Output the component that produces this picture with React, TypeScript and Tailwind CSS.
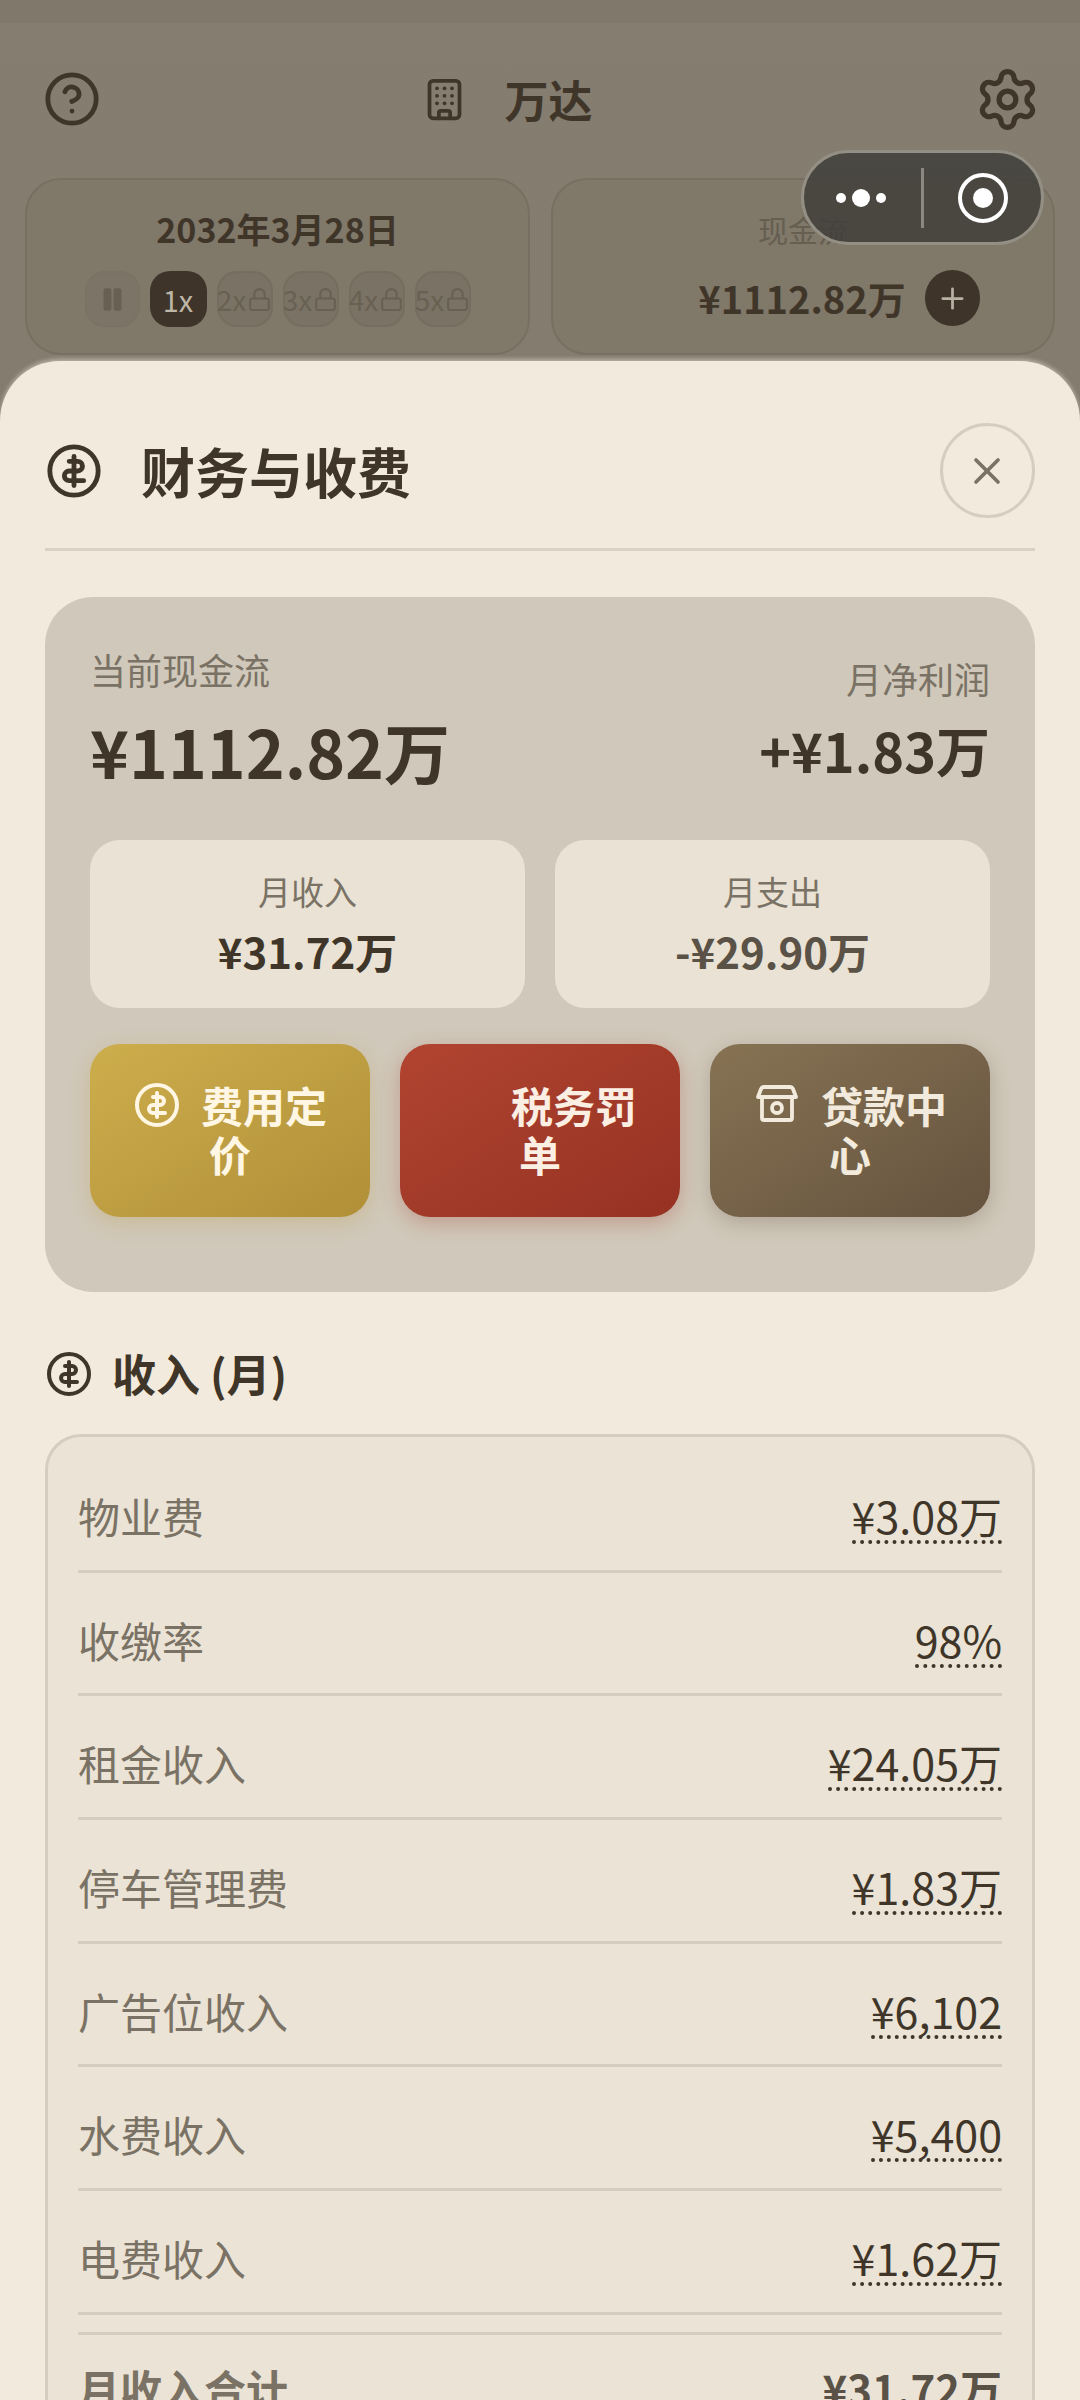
import { Building, CircleHelp, Lock, Pause, Plus, Settings, X } from "lucide-react";

const FONT = { fontFamily: '"Noto Sans CJK SC", "Noto Sans", sans-serif' };

const speeds = ["2x", "3x", "4x", "5x"];

const rows = [
  ["物业费", "¥3.08万"],
  ["收缴率", "98%"],
  ["租金收入", "¥24.05万"],
  ["停车管理费", "¥1.83万"],
  ["广告位收入", "¥6,102"],
  ["水费收入", "¥5,400"],
  ["电费收入", "¥1.62万"],
];

function CoinIcon({ size, className }: { size: number; className?: string }) {
  return (
    <svg
      viewBox="0 0 24 24"
      width={size}
      height={size}
      className={className}
      fill="none"
      stroke="currentColor"
      strokeWidth="2"
      strokeLinecap="round"
      strokeLinejoin="round"
    >
      <circle cx="12" cy="12" r="10" />
      <path d="M10 8h3.5a2 2 0 0 1 0 4H10a2 2 0 0 0 0 4h6" />
      <path d="M12 6v12" />
    </svg>
  );
}

function VaultIcon() {
  return (
    <svg
      viewBox="0 0 48 48"
      className="inline-block w-[48px] h-[48px] mr-[20px] align-[-6px]"
      fill="none"
      stroke="currentColor"
      strokeWidth="3.8"
      strokeLinecap="round"
      strokeLinejoin="round"
    >
      <path d="M11 6H37Q39 6 40 8L43 16H5L8 8Q9 6 11 6Z" />
      <path d="M9 16V37Q9 39 11 39H37Q39 39 39 37V16" />
      <circle cx="24" cy="27" r="5" />
    </svg>
  );
}

function CapsuleMenu() {
  return (
    <div className="absolute left-[801px] top-[150px] w-[243px] h-[95px] rounded-full bg-[#403e3a]/85 border-[3px] border-[#938f85] flex items-center">
      <div className="w-[117px] pr-[3px] flex items-center justify-center gap-[6px]">
        <span className="w-[10px] h-[10px] rounded-full bg-white" />
        <span className="w-[18px] h-[18px] rounded-full bg-white" />
        <span className="w-[10px] h-[10px] rounded-full bg-white" />
      </div>
      <div className="w-[3px] h-[60px] bg-[#8b887f]" />
      <div className="flex-1 flex items-center justify-center">
        <div className="w-[50px] h-[50px] rounded-full border-[4px] border-white flex items-center justify-center">
          <span className="w-[20px] h-[20px] rounded-full bg-white" />
        </div>
      </div>
    </div>
  );
}

export default function App() {
  return (
    <div style={FONT} className="relative w-[1080px] h-[2400px] overflow-hidden bg-gradient-to-b from-[#847d70] to-[#7f7769]">
      <div className="h-[23px] bg-[#7f786b]" />

      {/* Dimmed game header behind the sheet */}
      <div className="h-[338px] text-[#3f3629]">
        <div className="flex items-center justify-between pl-[43px] pr-[39px] pt-[47px] h-[152px] pb-[47px]">
          <CircleHelp size={58} strokeWidth={2} />
          <div className="flex items-center gap-[38px] pr-[61px]">
            <Building size={45} strokeWidth={2} />
            <span className="text-[44px] leading-[56px] font-bold">万达</span>
          </div>
          <Settings size={67} strokeWidth={1.9} />
        </div>
        <div className="flex gap-[21px] pl-[25px] pr-[25px] mt-[3px]">
          <div className="w-[505px] h-[177px] rounded-[36px] border-[2px] border-[#777062] bg-[#807869] flex flex-col items-center pt-[27px]">
            <div className="text-[34px] leading-[44px] font-semibold">2032年3月28日</div>
            <div className="flex gap-[10px] mt-[20px]">
              <div className="w-[55px] h-[56px] rounded-[20px] bg-[#7c7466] border-[2px] border-[#7a7264] flex items-center justify-center text-[#686153]">
                <Pause size={27} fill="currentColor" />
              </div>
              <div className="w-[57px] h-[56px] rounded-[20px] bg-[#3f3429] flex items-center justify-center text-[#bdb5a6] text-[29px] leading-[36px]">
                1x
              </div>
              {speeds.map((s) => (
                <div
                  key={s}
                  className="w-[56px] h-[56px] rounded-[20px] bg-[#7a7264] border-[2px] border-[#756d5f] flex items-center justify-center gap-[1px] text-[#686153] text-[28px] leading-[36px]"
                >
                  {s}
                  <Lock size={25} strokeWidth={2} className="shrink-0" />
                </div>
              ))}
            </div>
          </div>
          <div className="w-[504px] h-[177px] rounded-[36px] border-[2px] border-[#777062] bg-[#807869] flex flex-col items-center pt-[27px]">
            <div className="text-[30px] leading-[44px] text-[#655e51]">现金流</div>
            <div className="flex items-center gap-[19px] pl-[72px] mt-[19px]">
              <span className="text-[38px] leading-[56px] font-semibold whitespace-nowrap">¥1112.82万</span>
              <span className="w-[55px] h-[56px] rounded-full bg-[#3f3429] flex items-center justify-center text-[#b9b1a3]">
                <Plus size={33} strokeWidth={2} />
              </span>
            </div>
          </div>
        </div>
      </div>

      {/* Finance sheet */}
      <div className="h-[2040px] rounded-t-[60px] bg-[#f2eadc] px-[45px] shadow-[0_-2px_4px_rgba(242,234,220,0.5)]">
        <div className="flex items-center justify-between h-[190px] border-b-[3px] border-[#d9d2c4] pb-[31px] pt-[63px]">
          <div className="flex items-center gap-[38px] text-[#3f3629]">
            <CoinIcon size={58} />
            <span className="text-[54px] leading-[64px] font-bold">财务与收费</span>
          </div>
          <div className="w-[95px] h-[95px] rounded-full border-[3px] border-[#d5cdc0] flex items-center justify-center text-[#7a7264]">
            <X size={44} strokeWidth={2} className="-ml-[2px]" />
          </div>
        </div>

        <div className="mt-[46px] h-[695px] rounded-[48px] bg-[#d0c8ba] px-[45px] pt-[50px]">
          <div className="flex justify-between">
            <div>
              <div className="text-[36px] leading-[44px] text-[#7a7264]">当前现金流</div>
              <div className="text-[66px] leading-[84px] font-bold text-[#3f3629] mt-[17px]">¥1112.82万</div>
            </div>
            <div className="text-right pt-[9px]">
              <div className="text-[36px] leading-[44px] text-[#7a7264]">月净利润</div>
              <div className="text-[54px] leading-[72px] font-bold text-[#3f3629] mt-[14px]">+¥1.83万</div>
            </div>
          </div>

          <div className="grid grid-cols-2 gap-[30px] mt-[48px]">
            <div className="h-[168px] rounded-[30px] bg-[#e9e2d5] flex flex-col items-center pt-[29px]">
              <div className="text-[33px] leading-[44px] text-[#7a7264]">月收入</div>
              <div className="text-[42px] leading-[56px] font-bold text-[#3f3629] mt-[10px]">¥31.72万</div>
            </div>
            <div className="h-[168px] rounded-[30px] bg-[#e9e2d5] flex flex-col items-center pt-[29px]">
              <div className="text-[33px] leading-[44px] text-[#7a7264]">月支出</div>
              <div className="text-[42px] leading-[56px] font-bold text-[#5a5246] mt-[10px]">-¥29.90万</div>
            </div>
          </div>

          <div className="grid grid-cols-3 gap-[30px] mt-[36px]">
            <div className="h-[173px] rounded-[30px] px-[30px] pt-[36px] text-center text-[42px] leading-[49px] font-bold text-[#fff6e3] bg-gradient-to-br from-[#cdae4c] to-[#b08f38] shadow-[0_6px_20px_rgba(190,160,70,0.3)]">
              <CoinIcon size={48} className="inline-block mr-[20px] align-[-6px]" />
              费用定价
            </div>
            <div className="h-[173px] rounded-[30px] px-[30px] pt-[36px] text-center text-[42px] leading-[49px] font-bold text-[#fbeee2] bg-gradient-to-br from-[#b14431] to-[#963222] shadow-[0_6px_20px_rgba(160,60,40,0.3)]">
              <span className="inline-block w-[48px] h-[48px] mr-[20px] align-[-6px]" />
              税务罚单
            </div>
            <div className="h-[173px] rounded-[30px] px-[30px] pt-[36px] text-center text-[42px] leading-[49px] font-bold text-[#f2eadc] bg-gradient-to-br from-[#877353] to-[#65533f] shadow-[0_6px_20px_rgba(100,85,65,0.3)]">
              <VaultIcon />
              贷款中心
            </div>
          </div>
        </div>

        <div className="flex items-center gap-[19px] mt-[52px] h-[60px] text-[#3f3629]">
          <CoinIcon size={48} />
          <span className="text-[44px] leading-[60px] font-semibold -mt-[2px]">收入 (月)</span>
        </div>

        <div className="mt-[30px] h-[1100px] rounded-[36px] border-[3px] border-[#d5cdc0] bg-[#eae3d6] px-[30px] pt-[12px]">
          {rows.map(([label, value]) => (
            <div key={label} className="h-[123.7px] flex items-baseline justify-between border-b-[3px] border-[#d5cdc0] pt-[39px]">
              <span className="text-[42px] leading-[56px] text-[#7a7264]">{label}</span>
              <span className="text-[43px] leading-[50px] font-normal text-[#3f3629] border-b-[4px] border-dotted border-[#3f3629]">{value}</span>
            </div>
          ))}
          <div className="mt-[17px] border-t-[3px] border-[#d5cdc0] flex items-baseline justify-between pt-[25px]">
            <span className="text-[42px] leading-[56px] font-bold text-[#7a7264]">月收入合计</span>
            <span className="text-[42px] leading-[56px] font-bold text-[#5a5246]">¥31.72万</span>
          </div>
        </div>
      </div>

      <CapsuleMenu />
    </div>
  );
}
